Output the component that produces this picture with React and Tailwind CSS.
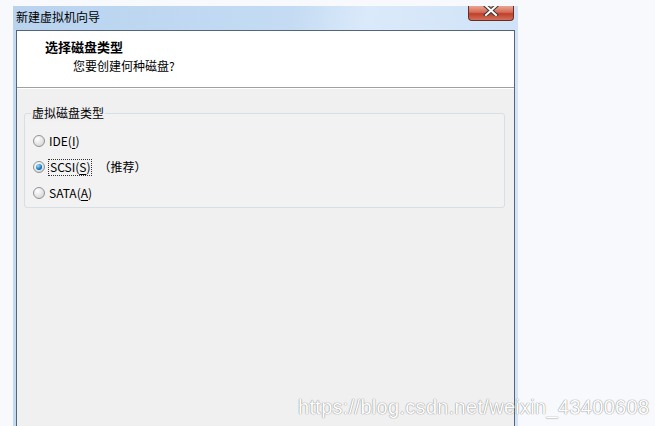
import React from 'react';

function Radio({ checked }) {
  return (
    <span className="relative w-[12px] h-[12px] rounded-full border border-[#8f9296] bg-[radial-gradient(circle_at_35%_30%,#ffffff,#dcdcdc_70%,#c4c4c4)] flex items-center justify-center shrink-0">
      {checked && (
        <span className="w-[6px] h-[6px] rounded-full bg-[radial-gradient(circle_at_35%_30%,#9fe0ff,#1a7fc6_55%,#0b3f7a)]" />
      )}
    </span>
  );
}

function Option({ checked, label, hot, rest, focused, note }) {
  const text = (
    <span>
      {label}(<span className="underline underline-offset-2">{hot}</span>){rest}
    </span>
  );
  return (
    <div className="flex items-center h-[26px]">
      <Radio checked={checked} />
      {focused ? (
        <span className="ml-[3px] px-[1px] h-[17px] flex items-center border border-dotted border-[#333]">{text}</span>
      ) : (
        <span className="ml-[4px]">{text}</span>
      )}
      {note && <span className="ml-[6px]">{note}</span>}
    </div>
  );
}

export default function App() {
  const font = { fontFamily: '"Noto Sans CJK SC", "Noto Sans", sans-serif' };
  return (
    <div className="relative w-[655px] h-[426px] overflow-hidden bg-[#f8f9fc] text-[12px] text-black" style={font}>
      <div className="ml-[13px] mt-[6px] w-[505px] h-[420px] flex flex-col bg-[linear-gradient(90deg,#c3daf2,#d3e4f7)]">
        {/* title bar */}
        <div className="h-[24px] flex items-start bg-[linear-gradient(100deg,#b9d3ef_0%,#c4dbf3_55%,#dbeafa_70%,#cfe2f7_100%)]">
          <span className="ml-[3px] mt-[2px] leading-[18px] text-[12px]">新建虚拟机向导</span>
          <div className="ml-auto mr-[4px] w-[46px] h-[15px] rounded-b-[4px] border border-t-0 border-[#6a2c20] bg-[linear-gradient(180deg,#e9a695_0%,#d56a55_45%,#bf3f2a_55%,#d1705c_100%)] flex items-start justify-center">
            <svg width="16" height="10" viewBox="0 0 16 10">
              <path d="M3 0 L13 9 M13 0 L3 9" stroke="#3a3a3a" strokeWidth="4" strokeLinecap="square" />
              <path d="M3 0 L13 9 M13 0 L3 9" stroke="#ffffff" strokeWidth="2" strokeLinecap="square" />
            </svg>
          </div>
        </div>
        {/* client */}
        <div className="mx-[3px] flex-1 flex flex-col border border-b-0 border-[#536579] bg-white">
          <div className="h-[56px] bg-white pl-[28px] pt-[8px]">
            <div className="font-bold text-[13px] leading-[16px]">选择磁盘类型</div>
            <div className="ml-[28px] mt-[3px] leading-[16px]">您要创建何种磁盘?</div>
          </div>
          <div className="h-px bg-[#a0a0a0]" />
          <div className="h-px bg-white" />
          <div className="flex-1 bg-[#f0f0f0] pt-[24px] px-[7px]">
            <div className="relative w-[481px] h-[95px] rounded-[3px] border border-[#d5dfe5] bg-[#f2f2f2] pl-[8px] pt-[14px]">
              <span className="absolute left-[6px] top-[-10px] px-[1px] bg-[#f0f0f0] leading-[18px]">虚拟磁盘类型</span>
              <Option label="IDE" hot="I" />
              <Option label="SCSI" hot="S" checked focused note="（推荐）" />
              <Option label="SATA" hot="A" />
            </div>
          </div>
        </div>
      </div>
      <div
        className="absolute left-[298px] top-[396px] text-[20px] leading-[22px] text-white tracking-[0.3px] [text-shadow:0_0_1px_#8a8a8a,0_0_1px_#8a8a8a]"
        style={{ fontFamily: '"Liberation Sans", Arial, sans-serif' }}
      >
        https://blog.csdn.net/weixin_43400608
      </div>
    </div>
  );
}
